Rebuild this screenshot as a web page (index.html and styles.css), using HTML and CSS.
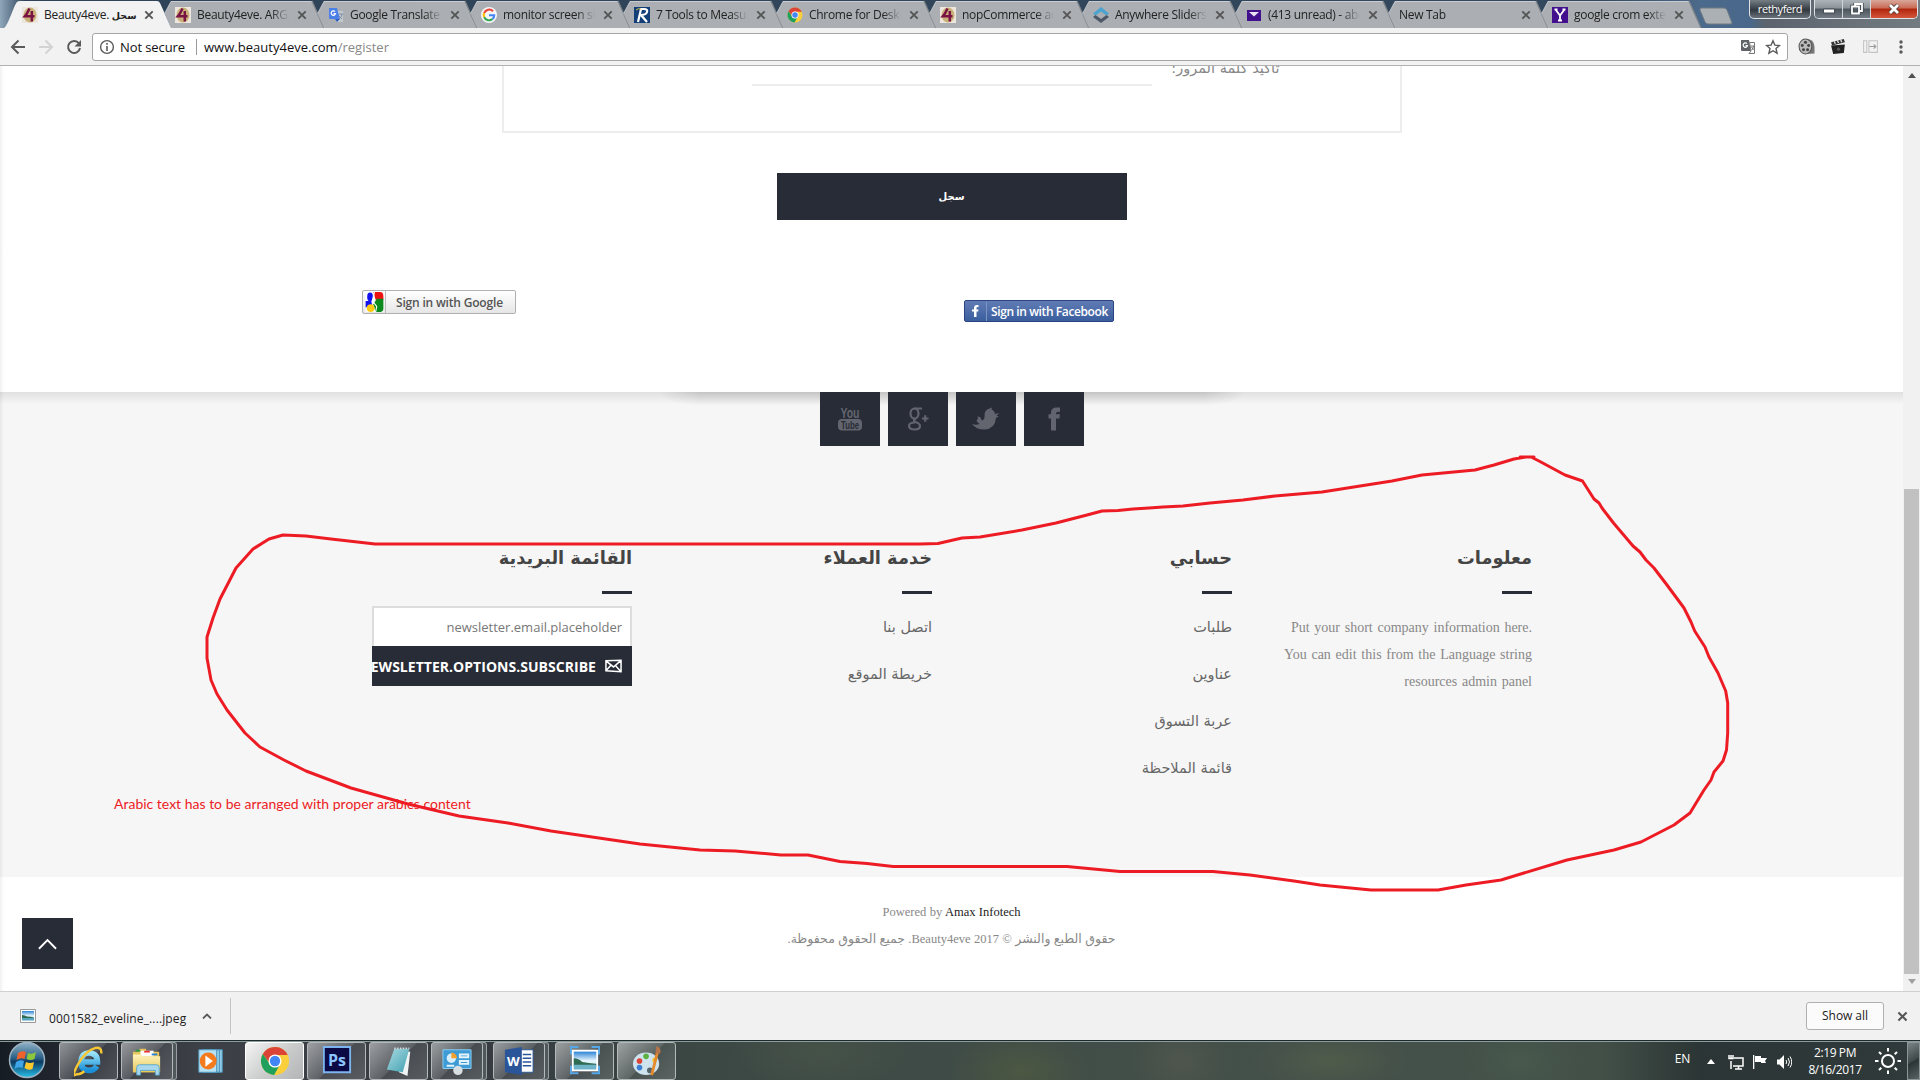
FILE: index.html
```html
<!DOCTYPE html>
<html lang="en">
<head>
<meta charset="utf-8">
<title>Beauty4eve. سجل</title>
<link rel="stylesheet" href="styles.css">
</head>
<body>
<svg class="defs" aria-hidden="true">
  <defs>
    <linearGradient id="g-orb" x1="0" y1="0" x2="0" y2="1"><stop offset="0" stop-color="#8fb2c8"/><stop offset=".45" stop-color="#2a5f86"/><stop offset=".55" stop-color="#0d3a60"/><stop offset="1" stop-color="#27c0ea"/></linearGradient>
    <linearGradient id="g-ie" x1="0" y1="0" x2="0" y2="1"><stop offset="0" stop-color="#9be4fb"/><stop offset="1" stop-color="#1a8fd8"/></linearGradient>
    <linearGradient id="g-folder" x1="0" y1="0" x2="0" y2="1"><stop offset="0" stop-color="#fdf4bd"/><stop offset="1" stop-color="#e8c65a"/></linearGradient>
    <linearGradient id="g-sky" x1="0" y1="0" x2="0" y2="1"><stop offset="0" stop-color="#2d83d6"/><stop offset=".5" stop-color="#e3f3fb"/></linearGradient>
    <linearGradient id="g-note" x1="0" y1="0" x2="1" y2="1"><stop offset="0" stop-color="#a9dbe2"/><stop offset="1" stop-color="#3f9fb0"/></linearGradient>
    <symbol id="i-four" viewBox="0 0 16 16"><path fill="#ece6dc" d="M0 0h16v16H0z"/><ellipse cx="8" cy="8" rx="6.500" ry="7.500" fill="#c9b27a"/><path fill="none" stroke="#7a1244" stroke-width="2.500" d="M7.500 1.500Q5 7 3 9.200h9.500M9.800 4v10.500"/></symbol>
    <symbol id="i-chrome" viewBox="0 0 32 32"><circle cx="16" cy="16" r="15" fill="#f9cf3c"/><path fill="#db4437" d="M3 8.500A15 15 0 0 1 29.500 9.500H16a6.500 6.500 0 0 0-6.300 8z"/><path fill="#1fa15d" d="M3 8.500A15 15 0 0 0 15 31l6.200-11A6.500 6.500 0 0 1 9.800 18.200z"/><circle cx="16" cy="16" r="7" fill="#fff"/><circle cx="16" cy="16" r="5.500" fill="#4285f4"/></symbol>
    <symbol id="i-x" viewBox="0 0 10 10"><path d="m1.300 1.300 7.400 7.400m0-7.400L1.300 8.700" stroke="#555" stroke-width="1.900" fill="none"/></symbol>
    <symbol id="tab-shape" viewBox="0 0 172 28"><path fill="#abafb3" d="M18 1 11.500 13.500 18 28H171L159 1z"/><path fill="none" stroke="#e0e4e7" stroke-opacity=".55" d="M11.500 13.500 18 1.500H159"/><path fill="none" stroke="#7f858a" stroke-width="1.300" d="M159 1 171 28"/></symbol>
    <symbol id="i-photo" viewBox="0 0 16 16"><path fill="#fff" stroke="#999" d="M.5 1.500h15v13H.5z"/><path fill="url(#g-sky)" d="M2 3h12v9.500H2z"/><path fill="#2f6b52" d="M2 7q3 0 5 1.500 4 0 7 1v1H2z"/><path fill="#57a4bf" d="M2 10h12v2.500H2z"/></symbol>
  </defs>
</svg>

<header class="tabstrip">
  <div class="tab tab-active"><svg class="shape" viewBox="0 0 172 28"><path fill="#f2f2f2" d="M4 28C8 26 14 5 17 2q1-1 3-1H157q2 0 3 2l10 22q1 3 2 3z"/></svg><svg class="fav"><use href="#i-four"/></svg><span class="label">Beauty4eve. <b>سجل</b></span><svg class="close"><use href="#i-x"/></svg></div>
  <div class="tab"><svg class="shape"><use href="#tab-shape"/></svg><svg class="fav"><use href="#i-four"/></svg><span class="label">Beauty4eve. ARGAN</span><svg class="close"><use href="#i-x"/></svg></div>
  <div class="tab"><svg class="shape"><use href="#tab-shape"/></svg><svg class="fav" viewBox="0 0 16 16"><path fill="#c3c8ce" d="M6 4h9v11H9z"/><path fill="#4a80e8" d="M1 1h8l3 11H2q-1 0-1-1z"/><path fill="#2f5fc4" d="m7 12 5 0-3 3z"/><path stroke="#7a8ea8" fill="none" d="M11 7h4m-1 0q0 3-3 5m0-3 3 3"/><path fill="none" stroke="#fff" stroke-width="1.200" d="M7 4.700a2.200 2.200 0 1 0 .5 2H5.500"/></svg><span class="label">Google Translate</span><svg class="close"><use href="#i-x"/></svg></div>
  <div class="tab"><svg class="shape"><use href="#tab-shape"/></svg><svg class="fav" viewBox="0 0 16 16"><circle cx="8" cy="8" r="8" fill="#f4f5f6"/><g fill="none" stroke-width="2.100"><path stroke="#ea4335" d="M12 4.200A5.300 5.300 0 0 0 3.200 6"/><path stroke="#fbbc05" d="M3.200 6a5.300 5.300 0 0 0 0 4.200"/><path stroke="#34a853" d="M3.200 10.200A5.300 5.300 0 0 0 11.500 12"/><path stroke="#4285f4" d="M11.500 12a5 5 0 0 0 1.700-3.800H8"/></g></svg><span class="label">monitor screen size</span><svg class="close"><use href="#i-x"/></svg></div>
  <div class="tab"><svg class="shape"><use href="#tab-shape"/></svg><svg class="fav" viewBox="0 0 16 16"><path fill="#123f78" d="M0 0h16v16H0z"/><path fill="none" stroke="#fff" stroke-width="2.200" d="M4 15 7 2h3q4 0 3 3t-6 3l6 7"/><path stroke="#d8c048" d="M2 3q2-2 5-1" fill="none"/></svg><span class="label">7 Tools to Measure</span><svg class="close"><use href="#i-x"/></svg></div>
  <div class="tab"><svg class="shape"><use href="#tab-shape"/></svg><svg class="fav"><use href="#i-chrome"/></svg><span class="label">Chrome for Desktop</span><svg class="close"><use href="#i-x"/></svg></div>
  <div class="tab"><svg class="shape"><use href="#tab-shape"/></svg><svg class="fav"><use href="#i-four"/></svg><span class="label">nopCommerce admin</span><svg class="close"><use href="#i-x"/></svg></div>
  <div class="tab"><svg class="shape"><use href="#tab-shape"/></svg><svg class="fav" viewBox="0 0 16 16"><path fill="#4ba3d0" d="m8 0 8 6.500-2.500 2L8 4.500l-5.500 4-2.500-2z"/><path fill="#4d5766" d="m8 16 8-6-2.500-2L8 12 2.500 8 0 10z"/></svg><span class="label">Anywhere Sliders -</span><svg class="close"><use href="#i-x"/></svg></div>
  <div class="tab"><svg class="shape"><use href="#tab-shape"/></svg><svg class="fav" viewBox="0 0 16 16"><path fill="#42108c" d="M1 3h14v11H1z"/><path fill="#e9e3f2" d="M3 5h10L8 9.500z"/></svg><span class="label">(413 unread) - abc</span><svg class="close"><use href="#i-x"/></svg></div>
  <div class="tab"><svg class="shape"><use href="#tab-shape"/></svg><span class="label label-wide">New Tab</span><svg class="close"><use href="#i-x"/></svg></div>
  <div class="tab"><svg class="shape"><use href="#tab-shape"/></svg><svg class="fav" viewBox="0 0 16 16"><path fill="#42108c" d="M0 0h16v16H0z"/><path fill="none" stroke="#fff" stroke-width="1.800" d="m3.500 2.500 4.500 6 4.500-6M8 8v6M2.500 2.500h3m5 0h3M6 13.500h4"/></svg><span class="label">google crom extension</span><svg class="close"><use href="#i-x"/></svg></div>
  <svg class="newtab" viewBox="0 0 34 18"><path fill="#abb0b5" stroke="#707a84" d="M2 1h23q2 0 3 2l5 13q0 1-2 1H9q-2 0-3-2L1 3q0-2 1-2z"/></svg>
  <div class="window-controls">
    <span class="user">rethyferd</span>
    <div class="buttons"><span><svg viewBox="0 0 14 12"><path fill="#fff" stroke="#444c55" d="M1.500 6h11v4h-11z"/></svg></span><span><svg viewBox="0 0 14 12"><path fill="none" stroke="#444c55" stroke-width="3.500" d="M2 3.500h7v7H2zM5 3V1h7v7H9.500"/><path fill="none" stroke="#fff" stroke-width="1.800" d="M2 3.500h7v7H2zM5 3V1h7v7H9.500"/></svg></span><span class="quit"><svg viewBox="0 0 14 12"><path stroke="#4b3a3a" stroke-width="4.500" d="m3 2 8 8m0-8-8 8"/><path stroke="#fff" stroke-width="2.800" d="m3 2 8 8m0-8-8 8"/></svg></span></div>
  </div>
</header>

<div class="toolbar">
  <svg class="nav" viewBox="0 0 16 16"><path fill="none" stroke="#5a5a5a" stroke-width="2" d="M15 8H2.500M8.500 1.500 2 8l6.500 6.500"/></svg>
  <svg class="nav" viewBox="0 0 16 16"><path fill="none" stroke="#d3d3d3" stroke-width="2" d="M1 8h12.500M7.500 1.500 14 8l-6.500 6.500"/></svg>
  <svg class="nav" viewBox="0 0 16 16"><path fill="none" stroke="#5a5a5a" stroke-width="2" d="M13 4.500A6 6 0 1 0 14 9"/><path fill="#5a5a5a" d="M15 1v6.500H8.500z"/></svg>
  <div class="omnibox">
    <svg class="info" viewBox="0 0 16 16"><circle cx="8" cy="8" r="6.400" fill="none" stroke="#5a5a5a" stroke-width="1.400"/><path stroke="#5a5a5a" stroke-width="1.600" d="M8 7v5M8 4v1.700"/></svg>
    <span class="secure">Not secure</span><span class="url">www.beauty4eve.com<i>/register</i></span>
    <svg class="omni-icon" viewBox="0 0 16 16"><path fill="#5f6368" d="M1 1h8l2 11H2q-1 0-1-1z"/><path fill="#fff" stroke="#777" d="M9.500 3.500h5v11H9l2-2.500z"/><path stroke="#777" fill="none" d="M10.500 7h4m-1 0q0 3-2 4m0-3 2 3"/><path fill="none" stroke="#fff" stroke-width="1.200" d="M7 4.700a2.200 2.200 0 1 0 .5 2H5.500"/></svg>
    <svg class="omni-icon" viewBox="0 0 16 16"><path fill="none" stroke="#5a5a5a" stroke-width="1.400" d="m8 1.800 1.900 4.300 4.600.4-3.500 3.100 1.100 4.600L8 11.700l-4.100 2.500L5 9.600 1.500 6.500l4.600-.4z"/></svg>
  </div>
  <svg class="ext" viewBox="0 0 16 16"><path fill="#777" d="M8 1q7 0 7.500 7v6.500L9 15z"/><ellipse cx="7" cy="8" rx="6" ry="7" fill="#bbb" stroke="#555"/><g fill="#444"><circle cx="7" cy="4" r="1.500"/><circle cx="4" cy="7" r="1.400"/><circle cx="10" cy="7" r="1.400"/><circle cx="5.200" cy="11" r="1.400"/><circle cx="9" cy="11" r="1.400"/></g></svg>
  <svg class="ext" viewBox="0 0 16 16"><path fill="#222" d="m1 7 13-1-1 8-10 1z"/><path fill="#333" d="M1 4 13 1l1 3L2 7z"/><path stroke="#ddd" stroke-width="1.300" d="m4 3 1 2.500m2-3.300 1 2.500m2-3.300 1 2.500"/><circle cx="8" cy="10.500" r="1.500" fill="#555"/></svg>
  <svg class="ext" viewBox="0 0 16 16"><path fill="none" stroke="#c4c4c4" d="M1.500 2.500h3v11h-3zM6.500 2.500h8v11h-8z"/><path fill="none" stroke="#999" d="M7 8h6m-2-2 2 2-2 2"/></svg>
  <svg class="menu" viewBox="0 0 4 14"><circle cx="2" cy="2" r="1.700"/><circle cx="2" cy="7" r="1.700"/><circle cx="2" cy="12" r="1.700"/></svg>
</div>

<main class="viewport">
  <div class="page" dir="rtl">
    <section class="form">
      <div class="fieldset"><label>تأكيد كلمة المرور:</label><span class="field"></span></div>
      <button class="register">سجل</button>
      <div class="signin" dir="ltr">
        <a class="google"><svg viewBox="0 0 16 18"><path fill="#fff" d="M0 0h16v18H0z"/><path fill="#e11" d="M7 0h6q3 0 3 4v3H9z"/><path fill="#0a8a1c" d="M10 6h6v9q0 3-4 3H9l-2-7z"/><ellipse cx="4" cy="4.500" rx="2.600" ry="4" fill="#11e"/><path fill="#11e" d="M0 8h5l1 4-6 2z"/><circle cx="4.500" cy="14.500" r="3.500" fill="#fc1"/><path fill="none" stroke="#fff" d="M8 0 6 8l4 5-1 5"/></svg><span>Sign in with Google</span></a>
        <a class="facebook"><svg viewBox="0 0 10 14"><path fill="#fff" d="M4 13V7.500H2v-2h2V4q0-3 3-3h1.500v2H7.300q-.8 0-.8 1v1.500h2l-.3 2H6.500V13z"/></svg><span>Sign in with Facebook</span></a>
      </div>
    </section>
    <footer class="footer">
      <div class="social">
        <span><svg viewBox="0 0 28 24"><rect x="2" y="12" width="24" height="11.500" rx="4" fill="#62656e"/><text class="you" x="14" y="10.500" textLength="19" lengthAdjust="spacingAndGlyphs">You</text><text class="tube" x="14" y="22" textLength="18" lengthAdjust="spacingAndGlyphs">Tube</text></svg></span>
        <span><svg viewBox="0 0 28 24"><g fill="none" stroke="#62656e" stroke-width="2.200"><ellipse cx="10.500" cy="6.500" rx="4" ry="5"/><path d="M10 1.500h8M11.500 11.500q-3 2 0 3.500 4.500 1.500 4.500 4 0 3.500-5.500 3.500T5 19q0-3.500 6-3.500M18 11.500h6.500M21.200 8.200v6.600"/></g></svg></span>
        <span><svg viewBox="0 0 28 24"><path fill="#62656e" d="M10 13.500Q13 12 12.500 9 12 3 17.500 1.500L20 .5l-.5 2q3 1 3.500 4.500l4-1-2.500 3H27l-3 2q-1 11-11.500 11.500Q4 22.500 0 17q4 1.500 7.500 0-3-1.500-3-4l1.500-1-.5-2.500L8 10z"/></svg></span>
        <span><svg viewBox="0 0 28 24"><path fill="#62656e" d="M11 23.500V11.500H8.500V7.300H11V6q0-5.500 5.500-5.500H20v4.200h-2q-2 0-2 1.600v1h4l-.6 4.200H16v12z"/></svg></span>
      </div>
      <div class="columns">
        <div class="col"><h3>معلومات</h3><p dir="ltr">Put your short company information here.<br>You can edit this from the Language string<br>resources admin panel</p></div>
        <div class="col"><h3>حسابي</h3><ul><li>طلبات</li><li>عناوين</li><li>عربة التسوق</li><li>قائمة الملاحظة</li></ul></div>
        <div class="col"><h3>خدمة العملاء</h3><ul><li>اتصل بنا</li><li>خريطة الموقع</li></ul></div>
        <div class="col"><h3>القائمة البريدية</h3><div class="newsletter"><div class="email">newsletter.email.placeholder</div><div class="subscribe"><svg viewBox="0 0 18 14"><path fill="none" stroke="#fff" stroke-width="1.600" d="M1 1.500 17 1v12L1 12zM1 1.500 9 8l8-7M1 12l5-5.500M17 13l-6-6.500"/></svg><span>NEWSLETTER.OPTIONS.SUBSCRIBE</span></div></div></div>
      </div>
    </footer>
    <div class="legal">
      <p dir="ltr">Powered by <a>Amax Infotech</a></p>
      <p>حقوق الطبع والنشر © 2017 <bdi>Beauty4eve</bdi>. جميع الحقوق محفوظة.</p>
    </div>
    <a class="to-top"><svg viewBox="0 0 20 12"><path fill="none" stroke="#fff" stroke-width="2" d="m1 11 9-9 9 9"/></svg></a>
    <span class="remark" dir="ltr">Arabic text has to be arranged with proper arabics content</span>
    <svg class="scribble" viewBox="0 66 1903 924"><path d="M1526 457 1514 459 1494 465 1475 470 1422 475 1392 481 1322 492 1275 496 1243 500 1210 503 1183 506 1163 507 1149 508 1133 509 1118 510.500 1102 511 1087 515 1056 523 1022 530 980 537 962 538 938 543.500 920 544H375L331 539 306 536 283 535 269 539 253 549 236 568 220 599 213 618 207 637V658L211 680 217 694 227 710 245 733 260 747 284 760 306 771 351 788 408 804 459 816 508 823 551 831 640 844 700 850 735 851 781 855H808L840 861.500 867 863.500 893 866.500H1067L1120 871.500H1213L1250 875 1294 881 1320 885 1371 890H1438L1466 885 1501 880 1567 860 1614 850 1641 842 1674 825 1690 813 1704 790 1711 780 1714 772 1723 761 1726.500 750 1727.700 733V703L1725.700 691 1718 673 1709 657 1705 647 1694.700 631 1691 622 1684 608 1667 585 1654 568 1646 560 1640 552 1633 546 1613.500 523 1602 508 1599 503 1594 499 1582.500 481 1565 475 1539 461 1533 458M1520 457H1534"/></svg>
  </div>
  <div class="scrollbar"><svg viewBox="0 0 8 5"><path fill="#505050" d="m4 0 4 5H0z"/></svg><span class="thumb"></span><svg viewBox="0 0 8 5"><path fill="#a0a0a0" d="m4 5 4-5H0z"/></svg></div>
</main>

<div class="downloads">
  <svg class="file-icon"><use href="#i-photo"/></svg><span class="file">0001582_eveline_....jpeg</span>
  <svg class="caret" viewBox="0 0 10 6"><path fill="none" stroke="#5a5a5a" stroke-width="1.800" d="m1 5.500 4-4 4 4"/></svg><span class="rule"></span>
  <span class="show-all">Show all</span><svg class="close"><use href="#i-x"/></svg>
</div>

<div class="taskbar">
  <span class="orb"><svg viewBox="0 0 38 38"><circle cx="19" cy="19" r="17.500" fill="url(#g-orb)" stroke="#9db2c0" stroke-width="1.500"/><path fill="#f0622c" d="M10 12q4-3 8-1l-1.500 7q-4-2-8 1z"/><path fill="#8cc63c" d="M20 12q4 2 8-1l-1.500 7q-4 2-8 0z"/><path fill="#3fa4e8" d="M8 21q4-3 8-1l-1.500 7q-4-2-8 1z"/><path fill="#fcc92d" d="M18 21q4 2 8 0l-1.500 7q-4 2-8-1z"/></svg></span>
  <div class="apps">
    <span class="app"><svg viewBox="0 0 32 32"><path fill="none" stroke="url(#g-ie)" stroke-width="6" d="M7.500 17H25q0-9-8.500-9.500T7.500 17q0 9 9 9 5 0 8-4.500"/><path fill="none" stroke="#f6c633" stroke-width="2.600" d="M29 8q1-7-6-6Q12 5 4 20t-1 10q3 1 8-3"/></svg></span>
    <span class="app stacked"><svg viewBox="0 0 32 32"><path fill="#e7c45c" d="M1 6h6l1-3h7v3h14v22H1z"/><path fill="#fff" d="M9 5h14v6H9z"/><path fill="#2d9c3f" d="M4 4h5v2H4z"/><path fill="#e33" d="M13 5h6v2h-6z"/><path fill="#2a84d2" d="M21 8h6v2h-6z"/><path fill="url(#g-folder)" d="M1 9h9l1 2h19v17H1z"/><path fill="#a9d8ee" stroke="#5aa6c8" d="M5 31v-8q0-3 3-3h18q3 0 3 3v8h-4v-5H9v5z"/></svg></span>
    <span class="app plain"><svg viewBox="0 0 32 32"><path fill="#8fcbe8" stroke="#4b93ba" d="M11 4h17v24H11zM7 4h18v24H7z"/><path fill="#b7e1f4" stroke="#4b93ba" d="M3 4h19v24H3z"/><circle cx="13" cy="16" r="9" fill="#f37b1d"/><path fill="#fff" d="m10 10 8 6-8 6z"/></svg></span>
    <span class="app current"><svg viewBox="0 0 32 32"><use href="#i-chrome"/></svg></span>
    <span class="app"><svg viewBox="0 0 32 32"><path fill="#0c0a45" stroke="#7cb4f0" stroke-width="2" d="M2 1h28v27H2z"/><text class="ps" x="16" y="21">Ps</text></svg></span>
    <span class="app"><svg viewBox="0 0 32 32"><path fill="#eef3f3" d="m12 4 16 2-3 26-9-4z"/><path fill="url(#g-note)" d="M11 3h16l-7 25-17-3z"/><path stroke="#ddd" stroke-width="2" stroke-dasharray="1.500" d="M11 2.500h16"/></svg></span>
    <span class="app stacked"><svg viewBox="0 0 32 32"><path fill="#3e9bd6" stroke="#8fd0f2" d="M1 4h30v20H1z"/><circle cx="10" cy="13" r="5" fill="#d8eefa"/><path fill="#f4a02c" d="M10 13V7a6 6 0 0 1 6 6z"/><path fill="none" stroke="#e4f4fc" stroke-width="2" d="M19 9h9v3h-9zM19 16h9v3h-9zM5 21h8"/><circle cx="17" cy="26" r="5" fill="#d9dee0"/></svg></span>
    <span class="app stacked"><svg viewBox="0 0 32 32"><path fill="#fff" stroke="#2a5699" d="M16 4h15v24H16z"/><path stroke="#2a5699" stroke-width="1.500" d="M20 9h9m-9 4h9m-9 4h9m-9 4h9"/><path fill="#2a5699" d="m1 4 18-3v30L1 28z"/><text class="word" x="10" y="21">W</text></svg></span>
    <span class="app"><svg viewBox="0 0 32 32"><path fill="none" stroke="#55a7e8" stroke-width="2" d="M1 9V1h8M23 1h8v8M31 21v8h-8M9 29H1v-8"/><path fill="#fff" d="M2 4h28v23H2z"/><path fill="url(#g-sky)" d="M4 6h24v19H4z"/><path fill="#2f6b52" d="M4 13q5 0 9 4 7 1 15 2v2H4z"/><path fill="#6fb3c9" d="M4 20h24v5H4z"/></svg></span>
    <span class="app"><svg viewBox="0 0 32 32"><ellipse cx="15" cy="19" rx="14" ry="12" fill="#cfe3ef"/><circle cx="19" cy="26" r="3" fill="#56646b"/><circle cx="8" cy="16" r="3" fill="#dd4433"/><circle cx="15" cy="11" r="3" fill="#5bb242"/><circle cx="8" cy="23" r="3" fill="#3b7fd4"/><circle cx="24" cy="15" r="2.500" fill="#f2c230"/><path stroke="#e58a2a" stroke-width="3" d="m27 7-6 24"/><path fill="#b5754a" d="m25 8 1-8q6 2 4 8z"/></svg></span>
  </div>
  <div class="tray">
    <span class="lang">EN</span>
    <svg class="up" viewBox="0 0 8 5"><path fill="#fff" d="m4 0 4 5H0z"/></svg>
    <svg class="ti" viewBox="0 0 16 16"><path fill="none" stroke="#fff" stroke-width="1.500" d="M6 4h9v8H5M7 15h7M10.500 12v3M3 7v8M1 1v3.500h4V1M3 1v3"/></svg>
    <svg class="ti" viewBox="0 0 16 16"><path fill="#fff" d="M1 1h1.300v14H1zM3 2h6v2h6l-2 3 1 2H9V8H3z"/></svg>
    <svg class="ti" viewBox="0 0 16 16"><path fill="#fff" d="M1 5.500h2.500L8 1v14L3.500 10.500H1z"/><path fill="none" stroke="#fff" d="M10 6q1.500 2 0 4m2-6q3 4 0 8m2-9.500q3.500 5.500 0 11"/></svg>
    <div class="clock"><span>2:19 PM</span><span>8/16/2017</span></div>
    <svg class="sun" viewBox="0 0 28 28"><g fill="none" stroke="#fff" stroke-width="2"><circle cx="14" cy="14" r="6"/><path d="M14 1v3.500M14 23.500V27M1 14h3.500M23.500 14H27M5 5l2.300 2.300M20.700 20.700 23 23M5 23l2.300-2.300M20.700 7.300 23 5"/></g></svg>
    <span class="peek"></span>
  </div>
</div>
</body>
</html>
```
FILE: styles.css
```css
* { box-sizing: border-box; }
body {
  margin: 0; width: 1920px; height: 1080px; overflow: hidden;
  display: flex; flex-direction: column;
  font: 12px "Open Sans", "DejaVu Sans", sans-serif; color: #222;
}
svg { display: block; flex: none; }
.defs { position: absolute; width: 0; height: 0; }
p, h3, ul { margin: 0; padding: 0; }

/* tab strip */
.tabstrip {
  height: 28px; flex: none; display: flex; position: relative;
  background: linear-gradient(90deg, #8fa7bb 0, #2f4358 25px, #33485c 1600px, #4c6a8b 1700px, #48678a 1750px, #5b646d 1765px, #737b82);
}
.tab {
  width: 153px; height: 28px; flex: none; position: relative;
  display: flex; align-items: center; gap: 6px; padding: 2px 0 0 22px;
}
.tab .shape { position: absolute; left: 0; top: 0; width: 172px; height: 28px; }
.tab .fav { width: 16px; height: 16px; position: relative; }
.tab .label {
  width: 94px; flex: none; position: relative; overflow: hidden; white-space: nowrap;
  letter-spacing: -0.3px; line-height: 20px;
  mask-image: linear-gradient(90deg, #000 74px, transparent 92px);
}
.tab-active .label { mask-image: none; }
.tab .label-wide { width: 116px; }
.tab b { font-size: 9.500px; }
.close { width: 10px; height: 10px; position: relative; }
.newtab { width: 34px; height: 18px; margin: 7px 0 0 16px; }
.window-controls { position: absolute; right: 2px; top: 0; display: flex; gap: 3px; }
.user {
  width: 62px; height: 19px; border: 1px solid #dfe3e6; border-top: 0; border-radius: 0 0 5px 5px;
  background: linear-gradient(#767f86, #32383f 55%, #69727a); color: #fff;
  font-size: 11px; line-height: 18px; text-align: center; letter-spacing: -0.4px;
}
.buttons {
  display: flex; height: 19px; border: 1px solid #dfe3e6; border-top: 0;
  border-radius: 0 0 5px 5px; overflow: hidden;
}
.buttons span {
  width: 28px; display: flex; align-items: center; justify-content: center;
  border-right: 1px solid #cfd4d8; background: linear-gradient(#aeb5ba, #8a9298 45%, #4c545c 50%, #737c84);
}
.buttons svg { width: 14px; height: 12px; }
.buttons .quit { width: 46px; border: 0; background: linear-gradient(#d9a79a, #c96a55 45%, #b0260d 50%, #d4553a); }

/* toolbar */
.toolbar {
  height: 38px; flex: none; display: flex; align-items: center; gap: 12px;
  padding: 0 14px 0 10px; background: #f2f2f2; border-bottom: 1px solid #b2b1b2;
}
.nav { width: 16px; height: 16px; }
.omnibox {
  width: 1696px; height: 28px; margin-left: -2px; flex: none; display: flex; align-items: center;
  padding: 0 6px; background: #fff; border: 1px solid #a5a5a5; border-radius: 3px; font-size: 13px;
}
.info { width: 16px; height: 16px; margin-right: 5px; }
.secure { width: 77px; border-right: 1px solid #9a9a9a; letter-spacing: -0.1px; line-height: 16px; color: #111; white-space: nowrap; }
.url { flex: 1; padding-left: 7px; letter-spacing: 0.02px; color: #111; }
.url i { font-style: normal; color: #888; }
.omni-icon { width: 16px; height: 16px; margin-left: 9px; }
.ext { width: 17px; height: 17px; margin-right: 3px; }
.ext:nth-of-type(4) { margin-left: -2px; }
.menu { width: 4px; height: 14px; fill: #5a5a5a; margin-left: 5px; }

/* page */
.viewport { height: 925px; flex: none; display: flex; overflow: hidden; }
.page { width: 1903px; position: relative; background: #fff; flex: none; }
.page::before {
  content: ""; position: absolute; z-index: 1; left: 0; top: 0; bottom: 0; width: 4px;
  background: linear-gradient(90deg, rgba(0,0,0,.06), transparent);
}
.form { height: 326px; display: flex; flex-direction: column; align-items: center; }
.fieldset {
  width: 900px; height: 67px; border: 2px solid #ededed; border-top: 0; padding: 0 120px;
  display: flex; gap: 8px;
}
.fieldset label {
  width: 120px; margin-top: -11px; font: 14.500px/26px "DejaVu Sans", sans-serif;
  color: #888; white-space: nowrap;
}
.field { width: 400px; height: 20px; border-bottom: 2px solid #ededed; }
.register {
  width: 350px; height: 47px; margin-top: 40px; border: 0; border-radius: 0; background: #282c37;
  color: #fff; font: bold 10px "DejaVu Sans", sans-serif;
}
.signin { align-self: stretch; display: flex; padding: 70px 0 0 362px; }
.signin a { display: flex; align-items: center; white-space: nowrap; }
.google {
  width: 154px; height: 24px; border: 1px solid #b0b0b0; border-radius: 2px; padding-left: 2px;
  background: linear-gradient(#fff, #e6e6e6);
}
.google svg { width: 19px; height: 20px; }
.google span {
  flex: 1; height: 22px; margin-left: 1px; padding-left: 10px; border-left: 1px solid #bbb;
  font-weight: 600; line-height: 23px; color: #555; letter-spacing: -0.18px;
}
.facebook {
  width: 150px; height: 22px; margin: 10px 0 0 448px; padding-left: 5px;
  border: 1px solid #29447e; border-radius: 2px;
  background: linear-gradient(#617cb4, #3a5e9e);
}
.facebook svg { width: 10px; height: 14px; margin-right: 6px; }
.facebook span {
  border-left: 1px solid #7c94c2; padding-left: 4px; font-weight: 600; line-height: 19px;
  color: #fff; letter-spacing: -0.4px;
}
.footer {
  height: 485px; position: relative;
  background: linear-gradient(rgba(0,0,0,.09), transparent 12px) #f6f6f6;
}
.footer::before {
  content: ""; position: absolute; left: 660px; top: 0; width: 584px; height: 14px;
  background: linear-gradient(rgba(0,0,0,.12), transparent);
  border-radius: 0 0 50px 50px / 0 0 14px 14px;
  mask-image: linear-gradient(90deg, transparent, #000 40px, #000 calc(100% - 40px), transparent);
}
.social { position: relative; display: flex; direction: ltr; justify-content: center; gap: 8px; padding-left: 1px; }
.social span { width: 60px; height: 54px; background: #282c37; display: flex; align-items: center; justify-content: center; }
.social svg { width: 28px; height: 24px; }
.you, .tube { font: 700 14px "Liberation Sans", sans-serif; text-anchor: middle; fill: #62656e; }
.tube { font-size: 11px; fill: #282c37; }
.columns { display: flex; gap: 40px; padding: 99px 371px 0 0; }
.col { width: 260px; }
.col h3 {
  height: 57px; margin-bottom: 1px; white-space: nowrap; color: #444;
  font: bold 17.800px/26px "DejaVu Sans", sans-serif; position: relative;
}
.col h3::after { content: ""; position: absolute; right: 0; top: 46px; width: 30px; height: 3px; background: #282c37; }
.col p {
  margin-top: 12px; text-align: right; white-space: nowrap; color: #888;
  font: 14px/27px "Liberation Serif", serif; word-spacing: 1.250px;
}
.col ul { list-style: none; padding-top: 1px; }
.col li { height: 47px; font: 14.500px/47px "DejaVu Sans", sans-serif; color: #666; white-space: nowrap; }
.newsletter { margin-top: 4px; }
.email {
  height: 40px; border: 2px solid #ddd; border-bottom: 0; background: #fff; padding: 0 8px;
  font-size: 13px; line-height: 38px; color: #777; direction: ltr; text-align: right;
}
.subscribe {
  height: 40px; background: #282c37; color: #fff; display: flex; align-items: center; gap: 9px;
  padding: 0 10px; overflow: hidden; font-weight: 700; font-size: 14px; white-space: nowrap;
}
.subscribe svg { width: 17px; height: 14px; }
.subscribe span { flex: none; letter-spacing: 0.03px; }
.legal {
  text-align: center; padding-top: 22px; color: #888;
  font: 12.500px/27px "Liberation Serif", "DejaVu Sans", serif; word-spacing: 0.300px;
}
.legal a { color: #222; }
.to-top {
  position: absolute; left: 22px; top: 852px; width: 51px; height: 51px; background: #282c37;
  display: flex; align-items: center; justify-content: center;
}
.to-top svg { width: 19px; height: 12px; }
.remark {
  position: absolute; left: 114px; top: 728px; white-space: nowrap;
  font: 14px/20px "Lato", sans-serif; color: #ed1c24;
}
.scribble { position: absolute; left: 0; top: 0; width: 1903px; height: 924px; }
.scribble path { fill: none; stroke: #ed1c24; stroke-width: 3; stroke-linejoin: round; stroke-linecap: round; }
.scrollbar {
  width: 17px; background: #f1f1f1; display: flex; flex-direction: column; align-items: center;
  justify-content: space-between; padding: 7px 0;
}
.scrollbar svg { width: 8px; height: 5px; }
.thumb { width: 15px; height: 485px; margin-top: 406px; background: #c1c1c1; }

/* download shelf */
.downloads {
  height: 49px; flex: none; display: flex; align-items: center; background: #f1f1f1;
  border-top: 1px solid #d0d0d0; padding: 0 12px 0 20px;
}
.file-icon { width: 16px; height: 16px; margin-right: 13px; }
.file { width: 138px; white-space: nowrap; letter-spacing: 0.12px; padding-top: 4px; }
.caret { width: 10px; height: 6px; margin: 0 18px 0 15px; }
.rule { width: 1px; height: 36px; background: #c4c4c4; }
.show-all {
  width: 78px; height: 28px; margin-left: auto; margin-right: 13px; border: 1px solid #b0b0b0;
  border-radius: 3px; background: #fbfbfb; text-align: center; line-height: 25px; letter-spacing: -0.05px;
}
.downloads .close { width: 11px; height: 11px; }

/* taskbar */
.taskbar {
  height: 40px; flex: none; display: flex; border-top: 1px solid #1e2a2c;
  box-shadow: inset 0 1px #8b9c9c;
  background:
    radial-gradient(ellipse 70px 40px at 1020px 30px, #56623d88, transparent),
    radial-gradient(ellipse 80px 30px at 1330px 20px, #59654a88, transparent),
    radial-gradient(ellipse 90px 40px at 820px 10px, #4d5a4a88, transparent),
    radial-gradient(ellipse 60px 40px at 1520px 20px, #4b604f88, transparent),
    radial-gradient(ellipse 50px 40px at 1180px 20px, #5a5d5088, transparent),
    linear-gradient(90deg, #161c24, #3d4047 200px, #363c41 500px, #3c4844 700px, #44504a 1300px, #435048 1600px, #2b3535 1700px, #303a3a);
}
.orb { width: 59px; display: flex; justify-content: center; padding-right: 5px; }
.orb svg { width: 38px; height: 38px; }
.apps { display: flex; gap: 3px; padding-top: 1px; }
.app {
  width: 59px; height: 38px; border: 1px solid #b4babc; border-radius: 3px;
  display: flex; align-items: center; justify-content: center;
  background: linear-gradient(135deg, rgba(255,255,255,.5), rgba(255,255,255,.18) 50%, rgba(255,255,255,.08) 51%, rgba(255,255,255,.16));
}
.app svg { width: 30px; height: 32px; }
.stacked { width: 52px; margin-right: 7px; box-shadow: 4px 0 0 -1px #50585c, 4px 0 0 0 #99a0a3; }
.plain { border-color: transparent; background: none; }
.plain svg { margin-left: -3px; }
.current { background: linear-gradient(135deg, #f4f4f4, #c9caca 55%, #b4b5b6); border-color: #fff; }
.ps { font: 700 17px "Open Sans", sans-serif; text-anchor: middle; fill: #8cc6ff; }
.word { font: 700 14px "Open Sans", sans-serif; text-anchor: middle; fill: #fff; }
.tray { margin-left: auto; display: flex; align-items: center; color: #fff; }
.lang { margin: -4px 17px 0 0; letter-spacing: -0.2px; }
.up { width: 8px; height: 5px; margin: 2px 13px 0 0; }
.ti { width: 16px; height: 16px; margin: 2px 8px 0 0; }
.clock {
  width: 64px; margin: 0 7px 0 3px; display: flex; flex-direction: column; text-align: center;
  line-height: 17px; letter-spacing: -0.4px; white-space: nowrap;
}
.sun { width: 28px; height: 28px; margin-right: 5px; }
.peek { width: 13px; height: 38px; border: 1px solid #8d9696; background: linear-gradient(150deg, #7a8484, #3d4747 50%, #2b3434 51%, #596363); }
```
